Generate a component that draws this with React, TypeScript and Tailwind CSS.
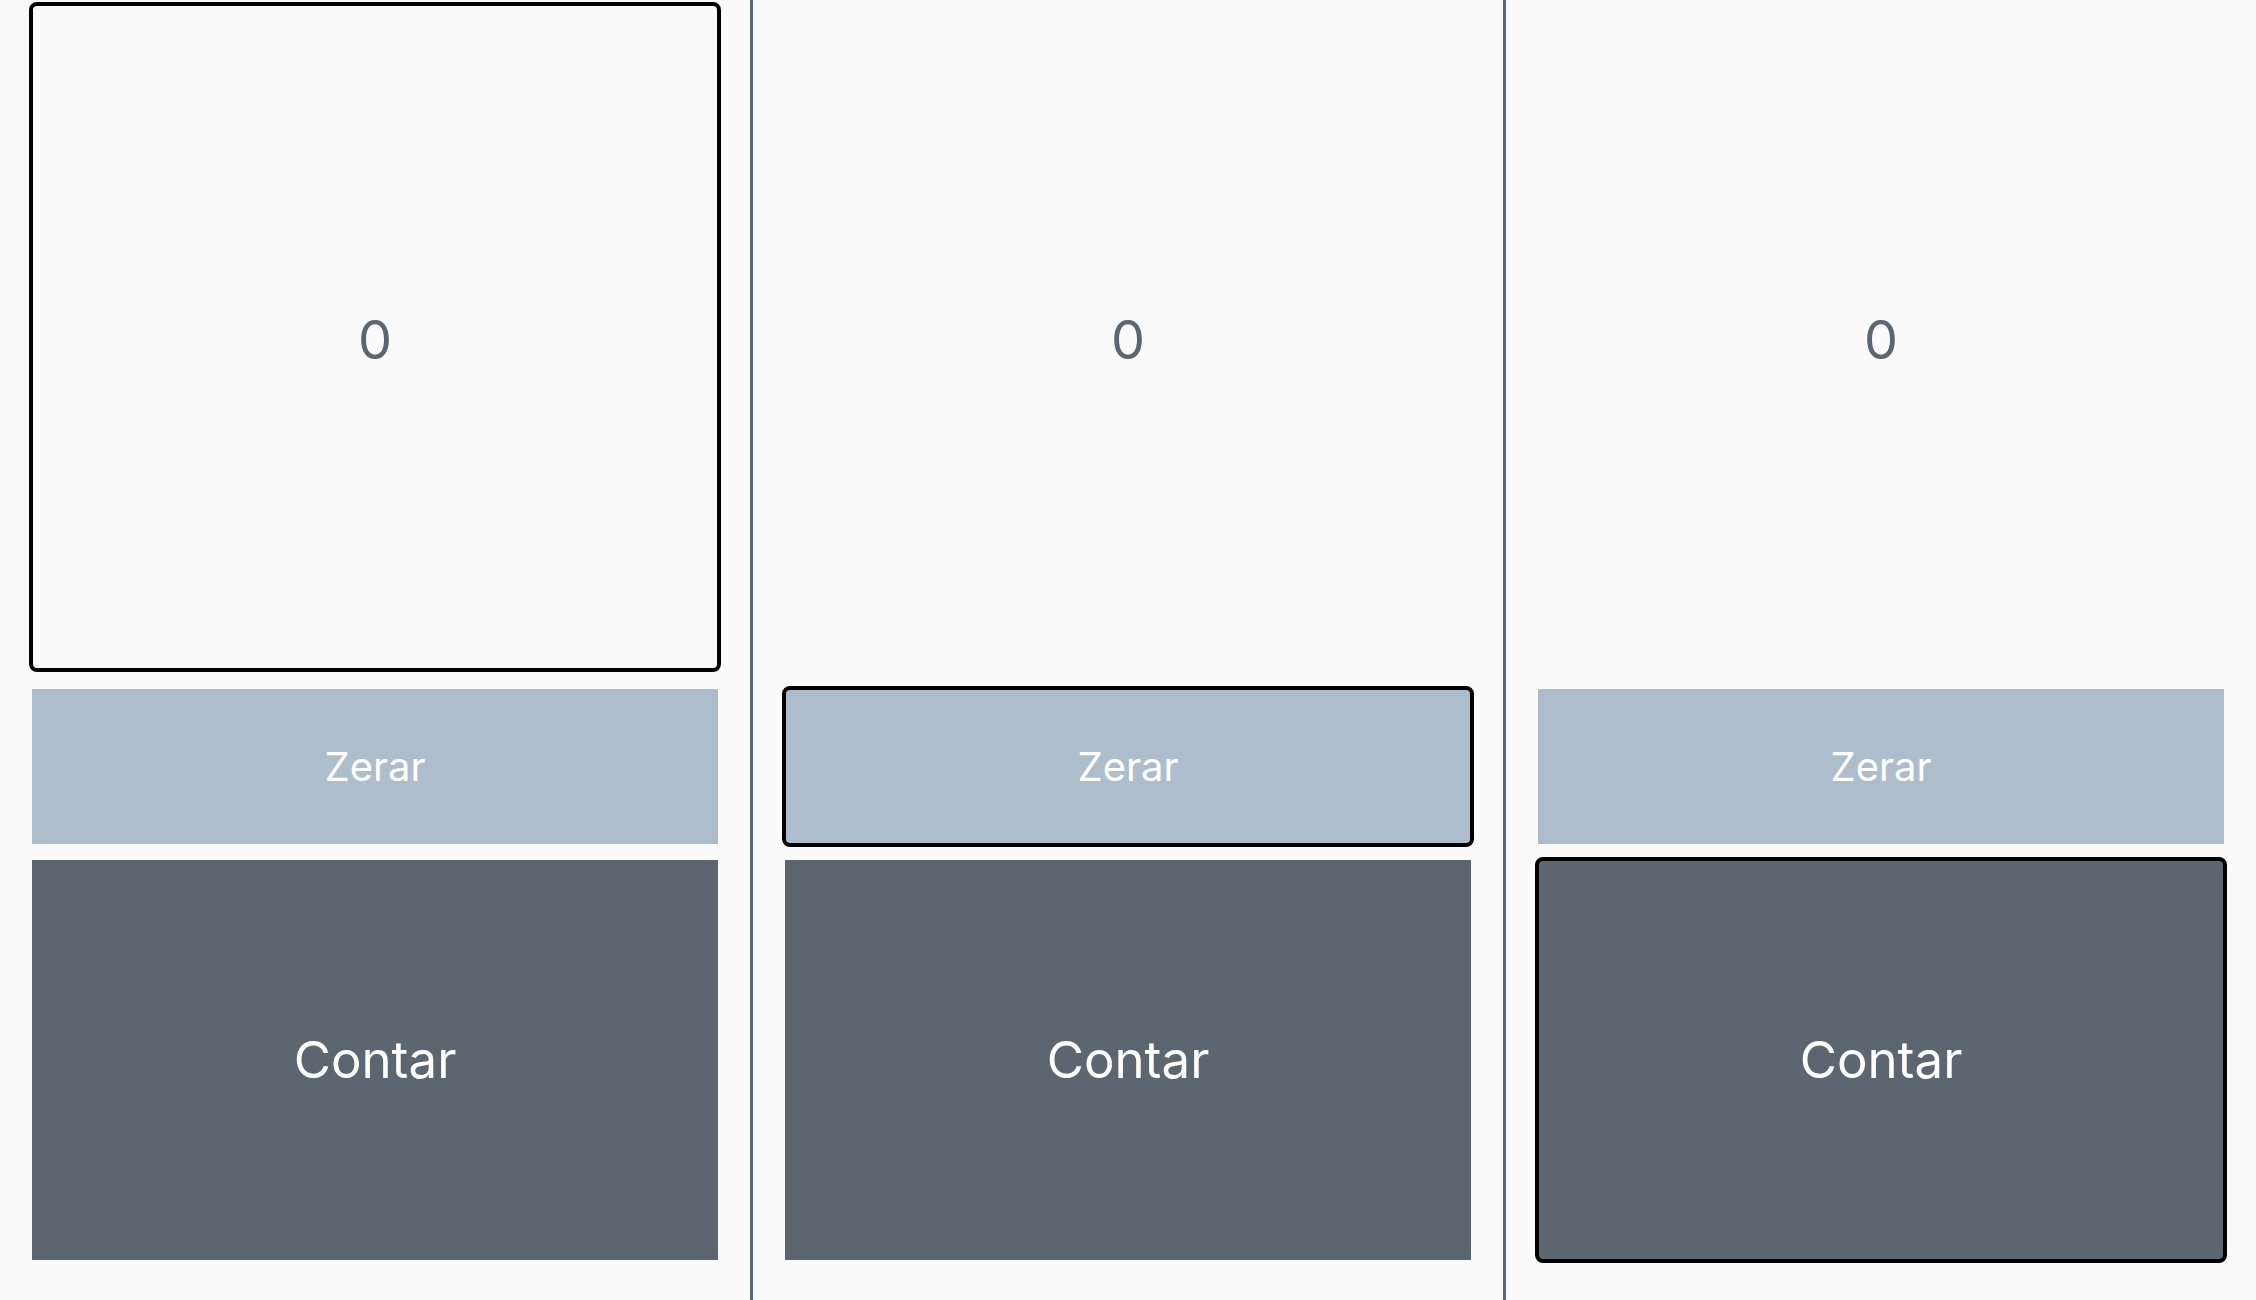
import React from "react";

type Focus = "display" | "zerar" | "contar";

function Ring() {
  return (
    <span className="pointer-events-none absolute -inset-[3px] rounded-[8px] border-4 border-black" />
  );
}

function Counter({ focus }: { focus: Focus }) {
  return (
    <div className="flex flex-1 flex-col px-8 pt-[5px] pb-10">
      <div className="relative mb-5 flex h-[664px] items-center justify-center">
        <span className="mt-[6px] text-[54px] leading-none text-[#5b6670]">0</span>
        {focus === "display" && <Ring />}
      </div>
      <button className="relative flex h-[155px] items-center justify-center bg-[#aebdcc] text-[40px] text-white">
        Zerar
        {focus === "zerar" && <Ring />}
      </button>
      <button className="relative mt-4 flex h-[400px] items-center justify-center bg-[#5b6670] text-[51px] text-white">
        Contar
        {focus === "contar" && <Ring />}
      </button>
    </div>
  );
}

export default function App() {
  return (
    <main
      className="flex h-[1300px] w-full bg-[#fafafa]"
      style={{ fontFamily: "Inter, 'Noto Sans', sans-serif" }}
    >
      <Counter focus="display" />
      <div className="w-[3px] bg-[#5b6670]" />
      <Counter focus="zerar" />
      <div className="w-[3px] bg-[#5b6670]" />
      <Counter focus="contar" />
    </main>
  );
}
